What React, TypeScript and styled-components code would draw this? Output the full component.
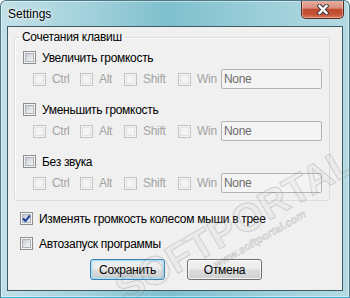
import React from "react";
import styled, { createGlobalStyle, css } from "styled-components";

const GlobalStyle = createGlobalStyle`
  html, body {
    margin: 0;
    padding: 0;
    background: #ffffff;
  }
  body {
    font-family: "Liberation Sans", Arial, sans-serif;
    font-size: 12px;
    letter-spacing: -0.3px;
    color: #000;
  }
  * {
    box-sizing: border-box;
  }
`;

const Window = styled.div`
  position: relative;
  width: 350px;
  height: 298px;
  border: 1px solid #4c7a86;
  border-bottom-color: #2fb6e0;
  border-radius: 6px 6px 0 0;
  background: linear-gradient(
    90deg,
    #c2e0e7 0%,
    #a6d3dd 22%,
    #7fc0cd 48%,
    #98cdd8 72%,
    #b4dae2 100%
  );
  box-shadow: inset 0 0 0 1px rgba(255, 255, 255, 0.45);
  display: flex;
  flex-direction: column;
  overflow: hidden;
`;

const TitleBar = styled.div`
  height: 25px;
  display: flex;
  justify-content: space-between;
  align-items: flex-start;
  flex-shrink: 0;
`;

const Title = styled.span`
  padding: 6px 0 0 7px;
  font-size: 12px;
  line-height: 14px;
  letter-spacing: 0;
  text-shadow: 0 0 6px rgba(255, 255, 255, 0.95), 0 0 3px rgba(255, 255, 255, 0.9);
`;

const CloseButton = styled.div`
  width: 43px;
  height: 19px;
  margin: -1px 5px 0 0;
  border: 1px solid #5b2a22;
  border-top: none;
  border-radius: 0 0 5px 5px;
  background: linear-gradient(
    #e9b2a5 0%,
    #d98d7b 45%,
    #c14a30 52%,
    #c45034 78%,
    #d9785b 100%
  );
  box-shadow: inset 0 0 0 1px rgba(255, 255, 255, 0.35);
  display: flex;
  align-items: center;
  justify-content: center;
`;

const Client = styled.div`
  flex: 1;
  margin: 0 6px 6px;
  border: 1px solid #3d5a63;
  background: #f0f0f0;
  padding: 0 0 0 6px;
  display: flex;
  flex-direction: column;
  align-items: flex-start;
`;

const Group = styled.fieldset`
  width: 316px;
  min-width: 0;
  margin: 3px 0 0;
  padding: 0 0 7px 8px;
  border: 1px solid #d5dfe5;
  border-radius: 3px;
  box-shadow: inset 1px 1px 0 #ffffff;
`;

const Legend = styled.legend`
  margin-left: -3px;
  padding: 0 2px;
  line-height: 14px;
  font-size: 12px;
`;

const Row = styled.label<{ $top: number; $left?: number }>`
  display: flex;
  align-items: center;
  gap: 6px;
  height: 17px;
  margin-top: ${({ $top }) => $top}px;
  margin-left: ${({ $left }) => $left ?? 0}px;
  white-space: nowrap;
`;

const SubRow = styled.div`
  display: flex;
  align-items: center;
  height: 20px;
  margin-top: 3px;
  padding-left: 10px;
`;

const KeyOption = styled.label<{ $width: number }>`
  width: ${({ $width }) => $width}px;
  display: flex;
  align-items: center;
  gap: 6px;
  color: #a3a3a3;
`;

const Box = styled.span<{ $disabled?: boolean }>`
  position: relative;
  width: 13px;
  height: 13px;
  flex-shrink: 0;
  border: 1px solid #8e8f8f;
  background: #f4f4f4;
  display: flex;
  align-items: center;
  justify-content: center;
  &::after {
    content: "";
    position: absolute;
    inset: 1px;
    border: 1px solid #aeb3b9;
    background: linear-gradient(135deg, #c6cad0 0%, #e2e4e7 55%, #f6f6f6 100%);
  }
  ${({ $disabled }) =>
    $disabled &&
    css`
      border-color: #c4c4c4;
      &::after {
        border-color: #e2e2e2;
        background: #f4f4f4;
      }
    `}
  svg {
    position: relative;
    z-index: 1;
  }
`;

const KeyInput = styled.div`
  width: 101px;
  height: 20px;
  border: 1px solid #b3b3b3;
  border-radius: 2px;
  background: #f4f4f4;
  padding: 0 2px;
  color: #6d6d6d;
  display: flex;
  align-items: center;
`;

const Buttons = styled.div`
  display: flex;
  gap: 22px;
  margin: 7px 0 0 76px;
`;

const Button = styled.button<{ $default?: boolean }>`
  width: 75px;
  height: 21px;
  padding: 0;
  font-family: inherit;
  font-size: 12px;
  letter-spacing: -0.3px;
  color: #000;
  border: 1px solid #707070;
  border-radius: 3px;
  background: linear-gradient(#f2f2f2 0%, #ebebeb 49%, #dddddd 51%, #cfcfcf 100%);
  box-shadow: inset 0 0 0 1px rgba(255, 255, 255, 0.75);
  ${({ $default }) =>
    $default &&
    css`
      border-color: #3c7fb1;
      box-shadow: inset 0 0 0 1px #a6e3fb, inset 0 0 3px 1px rgba(72, 200, 250, 0.35);
    `}
`;

// faint stamp lying over the dialog
const Watermark = styled.div`
  position: absolute;
  left: 108px;
  top: 274px;
  transform: rotate(-30deg);
  transform-origin: left top;
  pointer-events: none;
  display: flex;
  flex-direction: column;
  align-items: flex-start;
  letter-spacing: 0;
`;

const WatermarkTitle = styled.span`
  font-family: "Liberation Sans", Arial, sans-serif;
  font-weight: bold;
  font-size: 40px;
  line-height: 38px;
  white-space: nowrap;
  color: rgba(200, 200, 200, 0.12);
  -webkit-text-stroke: 1px rgba(110, 110, 110, 0.26);
`;

const WatermarkUrl = styled.span`
  margin-left: 96px;
  font-family: "Liberation Sans", Arial, sans-serif;
  font-style: italic;
  font-weight: bold;
  font-size: 11px;
  line-height: 12px;
  white-space: nowrap;
  color: rgba(170, 170, 170, 0.2);
  -webkit-text-stroke: 0.5px rgba(110, 110, 110, 0.3);
`;

const CloseIcon = () => (
  <svg width="12" height="11" viewBox="0 0 12 11">
    <g strokeLinecap="square">
      <path d="M2.5 2 L9.5 9 M9.5 2 L2.5 9" stroke="#3b3b3b" strokeWidth="4.4" />
      <path d="M2.5 2 L9.5 9 M9.5 2 L2.5 9" stroke="#ffffff" strokeWidth="2.4" />
    </g>
  </svg>
);

const Check = () => (
  <svg width="11" height="11" viewBox="0 0 11 11">
    <path d="M2 5.5 L4.5 8 L9 2.5" fill="none" stroke="#9fb6e6" strokeWidth="3" />
    <path d="M2 5.5 L4.5 8 L9 2.5" fill="none" stroke="#1f3e94" strokeWidth="1.8" />
  </svg>
);

const CheckBox = ({ disabled, checked }: { disabled?: boolean; checked?: boolean }) => (
  <Box $disabled={disabled}>{checked && <Check />}</Box>
);

const keys = [
  { name: "Ctrl", width: 47 },
  { name: "Alt", width: 44 },
  { name: "Shift", width: 54 },
  { name: "Win", width: 43 },
];

const actions = [
  { label: "Увеличить громкость", top: 5 },
  { label: "Уменьшить громкость", top: 12 },
  { label: "Без звука", top: 12 },
];

const App = () => {
  return (
    <>
      <GlobalStyle />
      <Window>
        <TitleBar>
          <Title>Settings</Title>
          <CloseButton>
            <CloseIcon />
          </CloseButton>
        </TitleBar>
        <Client>
          <Group>
            <Legend>Сочетания клавиш</Legend>
            {actions.map((a) => (
              <React.Fragment key={a.label}>
                <Row $top={a.top}>
                  <CheckBox />
                  {a.label}
                </Row>
                <SubRow>
                  {keys.map((k) => (
                    <KeyOption key={k.name} $width={k.width}>
                      <CheckBox disabled />
                      {k.name}
                    </KeyOption>
                  ))}
                  <KeyInput>None</KeyInput>
                </SubRow>
              </React.Fragment>
            ))}
          </Group>
          <Row $top={9} $left={6}>
            <CheckBox checked />
            Изменять громкость колесом мыши в трее
          </Row>
          <Row $top={8} $left={6}>
            <CheckBox />
            Автозапуск программы
          </Row>
          <Buttons>
            <Button $default>Сохранить</Button>
            <Button>Отмена</Button>
          </Buttons>
        </Client>
        <Watermark>
          <WatermarkTitle>SOFTPORTAL</WatermarkTitle>
          <WatermarkUrl>www.softportal.com</WatermarkUrl>
        </Watermark>
      </Window>
    </>
  );
};

export default App;
